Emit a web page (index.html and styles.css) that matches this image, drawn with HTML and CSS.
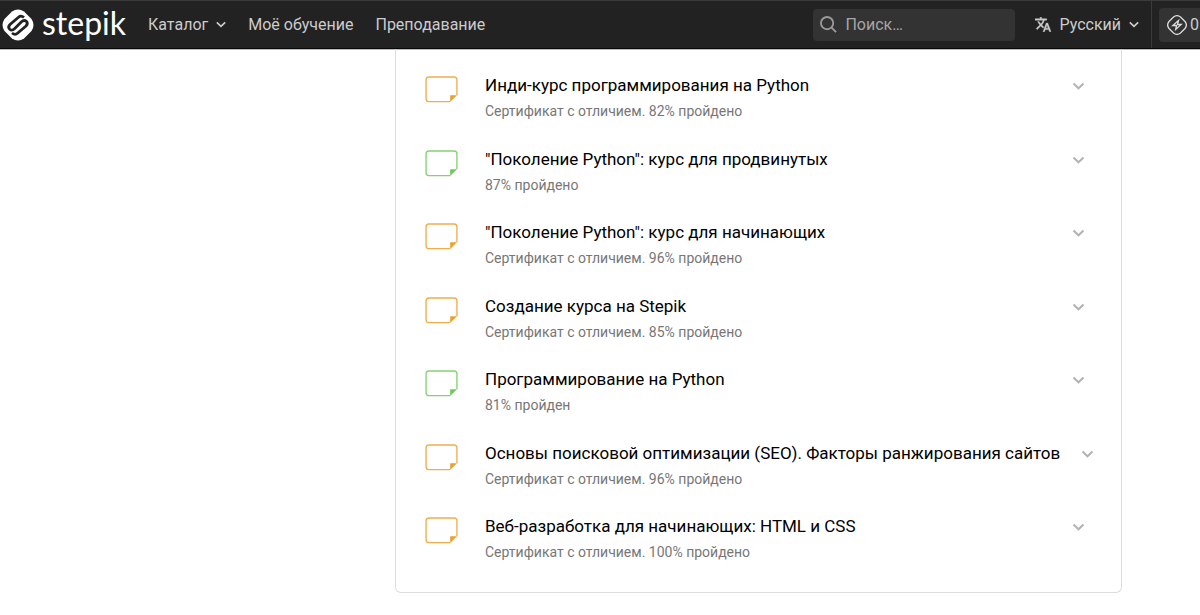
FILE: index.html
```html
<!DOCTYPE html>
<html lang="ru">
<head>
<meta charset="utf-8">
<meta name="viewport" content="width=device-width, initial-scale=1">
<title>Stepik</title>
<link rel="stylesheet" href="styles.css">
</head>
<body>
<svg class="sprite" aria-hidden="true">
  <symbol id="chevron" viewBox="0 0 12 8"><path d="M1 1.5 6 6.3 11 1.5" fill="none" stroke="currentColor"/></symbol>
  <symbol id="note" viewBox="0 0 34 28">
    <path d="M26 26.5H4Q1 26.5 1 23.5V4Q1 1 4 1H30Q33 1 33 4V20" fill="none" stroke="currentColor" stroke-width="1.4" opacity=".85"/>
    <path d="M26 20H33L26 27Z" fill="currentColor"/>
  </symbol>
</svg>
<header class="navbar">
  <a class="logo" href="#">
    <svg class="logo-mark" viewBox="0 0 32 32" aria-hidden="true">
      <path d="M10 2.5Q16-1.5 22 2.5L29.5 10Q33.5 16 29.5 22L22 29.5Q16 33.5 10 29.5L2.5 22Q-1.5 16 2.5 10Z" fill="#fff"/>
      <path d="M22 8.5Q19 6 16.5 8.2L8 15.5Q5.500 18 7.700 20.200 10 22.200 12.500 19.800L19.500 12.800Q22 10.300 24.300 12.300 26.500 14.500 24 17L15.500 24.300Q13 26.500 10 24" fill="none" stroke="#222" stroke-width="2.800"/>
    </svg>
    <span class="logo-text">stepik</span>
  </a>
  <nav class="menu">
    <button class="menu-item" type="button">Каталог <svg class="nav-chevron" aria-hidden="true"><use href="#chevron"/></svg></button>
    <a class="menu-item" href="#">Моё обучение</a>
    <a class="menu-item" href="#">Преподавание</a>
  </nav>
  <form class="search">
    <svg class="search-icon" viewBox="0 0 18 18" aria-hidden="true"><circle cx="7.500" cy="7.500" r="6.500"/><path d="M12 12 17 17"/></svg>
    <input class="search-input" type="search" placeholder="Поиск…" aria-label="Поиск">
  </form>
  <button class="language" type="button">
    <svg class="language-icon" viewBox="1 2 22 20" aria-hidden="true"><path fill="currentColor" stroke="currentColor" stroke-width=".6" d="m12.870 15.070-2.540-2.510.03-.03A17.520 17.520 0 0 0 14.070 6H17V4h-7V2H8v2H1v2h11.170C11.500 7.920 10.440 9.750 9 11.350 8.070 10.320 7.300 9.190 6.690 8h-2c.73 1.630 1.730 3.170 2.980 4.560l-5.090 5.020L4 19l5-5 3.110 3.110.76-2.040zM18.500 10h-2L12 22h2l1.120-3h4.750L21 22h2l-4.500-12zm-2.620 7 1.620-4.330L19.120 17h-3.240z"/></svg>
    Русский
    <svg class="nav-chevron" aria-hidden="true"><use href="#chevron"/></svg>
  </button>
  <div class="account">
    <button class="points" type="button">
      <svg class="points-icon" viewBox="0 0 20 20" aria-hidden="true"><path d="M6.500 2Q10-.7 13.500 2L18 6.500Q20.700 10 18 13.500L13.500 18Q10 20.700 6.500 18L2 13.500Q-.7 10 2 6.500Z"/><path d="M11.500 5.500 5.800 10.500H9.500L8.700 14.500 14.200 9.500H10.500Z"/></svg>
      0
    </button>
  </div>
</header>
<main class="page">
  <ul class="courses">
    <li class="course excellent"><svg class="note" aria-hidden="true"><use href="#note"/></svg><div class="info"><h2 class="title">Инди-курс программирования на Python</h2><p class="status">Сертификат с отличием. 82% пройдено</p></div><button class="toggle" type="button" aria-label="Подробнее"><svg aria-hidden="true"><use href="#chevron"/></svg></button></li>
    <li class="course regular"><svg class="note" aria-hidden="true"><use href="#note"/></svg><div class="info"><h2 class="title">"Поколение Python": курс для продвинутых</h2><p class="status">87% пройдено</p></div><button class="toggle" type="button" aria-label="Подробнее"><svg aria-hidden="true"><use href="#chevron"/></svg></button></li>
    <li class="course excellent"><svg class="note" aria-hidden="true"><use href="#note"/></svg><div class="info"><h2 class="title">"Поколение Python": курс для начинающих</h2><p class="status">Сертификат с отличием. 96% пройдено</p></div><button class="toggle" type="button" aria-label="Подробнее"><svg aria-hidden="true"><use href="#chevron"/></svg></button></li>
    <li class="course excellent"><svg class="note" aria-hidden="true"><use href="#note"/></svg><div class="info"><h2 class="title">Создание курса на Stepik</h2><p class="status">Сертификат с отличием. 85% пройдено</p></div><button class="toggle" type="button" aria-label="Подробнее"><svg aria-hidden="true"><use href="#chevron"/></svg></button></li>
    <li class="course regular"><svg class="note" aria-hidden="true"><use href="#note"/></svg><div class="info"><h2 class="title">Программирование на Python</h2><p class="status">81% пройден</p></div><button class="toggle" type="button" aria-label="Подробнее"><svg aria-hidden="true"><use href="#chevron"/></svg></button></li>
    <li class="course excellent"><svg class="note" aria-hidden="true"><use href="#note"/></svg><div class="info"><h2 class="title">Основы поисковой оптимизации (SEO). Факторы ранжирования сайтов</h2><p class="status">Сертификат с отличием. 96% пройдено</p></div><button class="toggle" type="button" aria-label="Подробнее"><svg aria-hidden="true"><use href="#chevron"/></svg></button></li>
    <li class="course excellent"><svg class="note" aria-hidden="true"><use href="#note"/></svg><div class="info"><h2 class="title">Веб-разработка для начинающих: HTML и CSS</h2><p class="status">Сертификат с отличием. 100% пройдено</p></div><button class="toggle" type="button" aria-label="Подробнее"><svg aria-hidden="true"><use href="#chevron"/></svg></button></li>
  </ul>
</main>
</body>
</html>
```
FILE: styles.css
```css
* { box-sizing: border-box; }
body { margin: 0; background: #fff; color: #000; font-family: Roboto, sans-serif; }
button, input { font: inherit; color: inherit; }
button { border: 0; padding: 0; background: none; cursor: pointer; }
a { color: inherit; text-decoration: none; }
.sprite { display: none; }

.navbar {
  display: flex;
  align-items: center;
  height: 49px;
  overflow: hidden;
  background: #222;
  border-top: 1px solid #3a3a3a;
  border-bottom: 1px solid #080808;
  box-shadow: 0 1px 0 #bbb;
  color: #ccc;
  font-size: 16px;
  line-height: 24px;
  white-space: nowrap;
}
.logo { display: flex; align-items: center; gap: 8px; margin-left: 2px; width: 146px; flex: none; color: #fff; }
.logo-mark { width: 32px; height: 32px; }
.logo-text { font: 32px/40px Lato, sans-serif; padding-bottom: 4px; }
.menu { display: flex; gap: 22px; }
.menu-item { display: flex; align-items: center; gap: 8px; }
.nav-chevron { width: 10px; height: 7px; stroke-width: 2; }
.search {
  display: flex;
  align-items: center;
  gap: 8px;
  width: 202px;
  height: 32px;
  margin-left: auto;
  padding: 0 7px;
  flex: none;
  border-radius: 4px;
  background: #333;
}
.search-icon { width: 17px; height: 17px; flex: none; fill: none; stroke: #999; stroke-width: 2; }
.search-input { min-width: 0; flex: 1; padding: 0; border: 0; outline: 0; background: none; appearance: none; }
.search-input::placeholder { color: #a6a6a6; opacity: 1; }
.language { display: flex; align-items: center; gap: 8px; margin: 0 12px 0 20px; }
.language-icon { width: 16px; height: 15px; }
.account { display: flex; align-items: center; width: 49px; height: 47px; padding-left: 7px; border-left: 1px solid #3a3a3a; flex: none; }
.points { display: flex; align-items: center; gap: 3px; height: 34px; padding: 0 8px; flex: none; border-radius: 4px; background: #333; }
.points-icon { width: 20px; height: 20px; fill: none; stroke: #ddd; stroke-width: 1.3; }

.page { padding-left: 33%; padding-right: 6.5%; }
.courses {
  display: grid;
  grid-auto-rows: 1fr;
  min-height: 544px;
  margin: 0 0 0 -1px;
  padding: 25px 32px 3px 29px;
  list-style: none;
  border: 1px solid #ddd;
  border-top: 0;
  border-radius: 0 0 6px 6px;
}
.course { display: flex; align-items: flex-start; min-width: 0; }
.excellent { color: #eca02f; }
.regular { color: #6ccb58; }
.note { width: 33px; height: 27px; margin-top: 2px; flex: none; }
.info { flex: 1 0 auto; margin-left: 27px; padding-right: 14px; }
.title { margin: 0; color: #000; font-size: 17px; font-weight: 400; line-height: 22px; white-space: nowrap; }
.status { margin: 5px 0 0; color: #777; font-size: 14px; line-height: 20px; }
.toggle { display: flex; padding: 8px 4px 8px 7px; flex: none; color: #b3b3b3; }
.toggle svg { width: 13px; height: 8px; stroke-width: 2; }
```
